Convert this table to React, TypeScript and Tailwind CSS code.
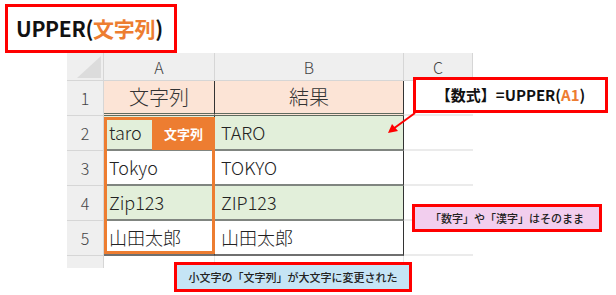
import React from "react";

const jp = { fontFamily: '"Noto Sans CJK JP", "Noto Sans", sans-serif' };

type Row = { n: string; a: string; b: string; fill: string; line: string };

const rows: Row[] = [
  { n: "2", a: "taro", b: "TARO", fill: "bg-[#E2EFDA]", line: "border-[#808580]" },
  { n: "3", a: "Tokyo", b: "TOKYO", fill: "bg-white", line: "border-[#808580]" },
  { n: "4", a: "Zip123", b: "ZIP123", fill: "bg-[#E2EFDA]", line: "border-[#808580]" },
  { n: "5", a: "山田太郎", b: "山田太郎", fill: "bg-white", line: "border-[#6f6f6f]" },
];

function HeadCell({ children }: { children?: React.ReactNode }) {
  return (
    <div className="flex items-center justify-center bg-[#EFEFEF] border-r border-b border-[#D6D6D6] text-[16px] font-light text-[#444]">
      {children}
    </div>
  );
}

function Sheet() {
  return (
    <div className="relative ml-[67px] w-[406px] h-[215px] overflow-hidden">
      <div className="grid grid-cols-[37px_111px_189px_69px] grid-rows-[28px_35px_35px_35px_35px_35px_35px]">
        {/* column header row */}
        <div className="relative bg-[#EFEFEF] border-r border-b border-[#D6D6D6]">
          <svg className="absolute left-[10px] top-[3px]" width="24" height="22" viewBox="0 0 24 22">
            <polygon points="24,0 24,22 0,22" fill="#DCDCDC" />
          </svg>
        </div>
        <HeadCell>A</HeadCell>
        <HeadCell>B</HeadCell>
        <HeadCell>C</HeadCell>

        {/* row 1: table headings */}
        <HeadCell>1</HeadCell>
        <div className="flex items-center justify-center bg-[#FCE4D6] border-r border-r-[#333] border-b-[3px] border-double border-b-[#5f6b5f] text-[20px] font-light text-[#333]">
          文字列
        </div>
        <div className="flex items-center justify-center bg-[#FCE4D6] border-r border-r-[#333] border-b-[3px] border-double border-b-[#5f6b5f] text-[20px] font-light text-[#333]">
          結果
        </div>
        <div className="bg-white border-b-2 border-[#EBEBEB]" />

        {rows.map((r) => (
          <React.Fragment key={r.n}>
            <HeadCell>{r.n}</HeadCell>
            <div className={`flex items-center pl-[5px] ${r.fill} border-r border-r-[#333] border-b-2 ${r.line} text-[18px] font-light text-[#222]`}>
              {r.a}
            </div>
            <div className={`flex items-center pl-[6px] ${r.fill} border-r border-r-[#333] border-b-2 ${r.line} text-[18px] font-light text-[#222]`}>
              {r.b}
            </div>
            <div className="bg-white border-b-2 border-[#EBEBEB]" />
          </React.Fragment>
        ))}

        {/* row 6, mostly cut off */}
        <HeadCell>6</HeadCell>
        <div className="bg-white border-r border-[#E6E6E6]" />
        <div className="bg-white border-r border-[#E6E6E6]" />
        <div className="bg-white" />
      </div>

      {/* highlight frame over A2:A5 */}
      <div className="absolute left-[37px] top-[64px] w-[111px] h-[137px] border-[3px] border-[#ED7D31]">
        <div className="absolute right-[-3px] top-[-3px] w-[63px] h-[33px] flex items-center justify-center bg-[#ED7D31] text-white text-[13px] font-bold">
          文字列
        </div>
      </div>
    </div>
  );
}

export default function App() {
  return (
    <div className="relative w-[616px] h-[295px] overflow-hidden bg-white" style={jp}>
      <div className="pt-[4px] pl-[5px]">
        <div className="w-[172px] h-[49px] border-[3px] border-[#FF0000] flex items-center pl-[8px] text-[21px] font-bold text-[#111] tracking-[-0.3px]">
          UPPER(<span className="text-[#ED7D31]">文字列</span>)
        </div>
      </div>

      <Sheet />

      {/* formula callout */}
      <div className="absolute left-[413px] top-[77px] w-[195px] h-[36px] border-[3px] border-[#FF0000] bg-white flex items-center justify-center text-[15px] font-bold text-[#111]">
        【数式】=UPPER(<span className="text-[#ED7D31]">A1</span>)
      </div>
      <svg className="absolute left-[384px] top-[110px]" width="36" height="28" viewBox="0 0 36 28">
        <line x1="31" y1="3" x2="9" y2="19" stroke="#FF0000" strokeWidth="2" />
        <polygon points="4,23 8,14 14,21" fill="#FF0000" />
      </svg>

      {/* note: digits and kanji */}
      <div className="absolute left-[412px] top-[204px] w-[190px] h-[28px] border-[3px] border-[#FF0000] bg-[#F2CEEE] flex items-center justify-center text-[11px] font-medium text-[#222]">
        「数字」や「漢字」はそのまま
      </div>

      {/* note: converted to upper case */}
      <div className="absolute left-[174px] top-[262px] w-[238px] h-[30px] border-[3px] border-[#FF0000] bg-[#C5E4F5] flex items-center justify-center text-[11px] font-medium text-[#222]">
        小文字の「文字列」が大文字に変更された
      </div>
    </div>
  );
}
